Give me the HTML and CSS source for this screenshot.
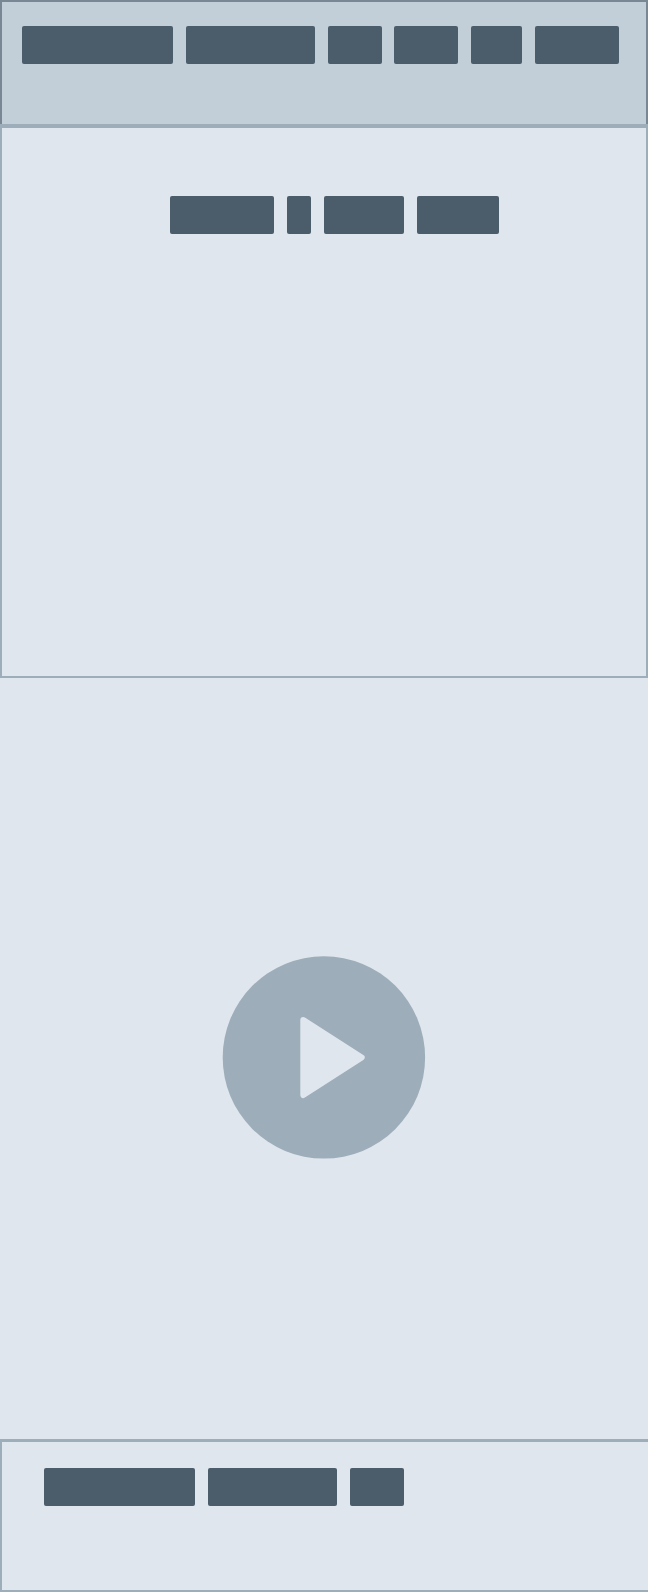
FILE: index.html
```html
<!DOCTYPE html>
<html lang="en">
<head>
<meta charset="utf-8">
<title>Wireframe</title>
<link rel="stylesheet" href="styles.css">
</head>
<body>
<main class="page">
  <header class="header">
    <div class="words">
      <span class="word" style="width:151.4px"></span>
      <span class="word" style="width:129.3px"></span>
      <span class="word" style="width:53.6px"></span>
      <span class="word" style="width:64.1px"></span>
      <span class="word" style="width:51.2px"></span>
      <span class="word" style="width:83.9px"></span>
    </div>
  </header>
  <section class="intro">
    <div class="words">
      <span class="word" style="width:104.4px"></span>
      <span class="word" style="width:24.4px"></span>
      <span class="word" style="width:80.4px"></span>
      <span class="word" style="width:81.7px"></span>
    </div>
  </section>
  <section class="video">
    <svg class="play" viewBox="0 0 648 761" aria-hidden="true">
      <circle class="disc" cx="323.9" cy="379.4" r="101.2"/>
      <path class="triangle" d="M303.3 341.9L361.7 379.4L303.3 417.1Z"/>
    </svg>
  </section>
  <footer class="footer">
    <div class="words">
      <span class="word" style="width:151.4px"></span>
      <span class="word" style="width:129.3px"></span>
      <span class="word" style="width:53.6px"></span>
    </div>
  </footer>
</main>
</body>
</html>
```
FILE: styles.css
```css
* { box-sizing: border-box; }
body { margin: 0; background: #dfe6ee; }
.page { display: flex; flex-direction: column; width: 648px; height: 1592px; }
.header {
  height: 124px;
  padding: 24px 20px;
  background: #c3cfd8;
  border: 2px solid #788793;
  border-bottom: 0;
}
.intro {
  height: 554px;
  padding: 68px 0 0 168px;
  border: 2px solid #9dadb9;
  border-top-width: 4px;
}
.video { height: 761px; }
.play { display: block; width: 648px; height: 761px; }
.disc { fill: #9dadb9; }
.triangle { fill: #dfe6ee; stroke: #dfe6ee; stroke-width: 6; stroke-linejoin: round; }
.footer {
  height: 153px;
  padding: 26px 0 0 42px;
  border: 2px solid #9dadb9;
  border-top-width: 3px;
  border-right: 0;
}
.words { display: flex; gap: 12.65px; }
.word { flex: none; height: 38px; border-radius: 2px; background: #4b5d6a; }
```
